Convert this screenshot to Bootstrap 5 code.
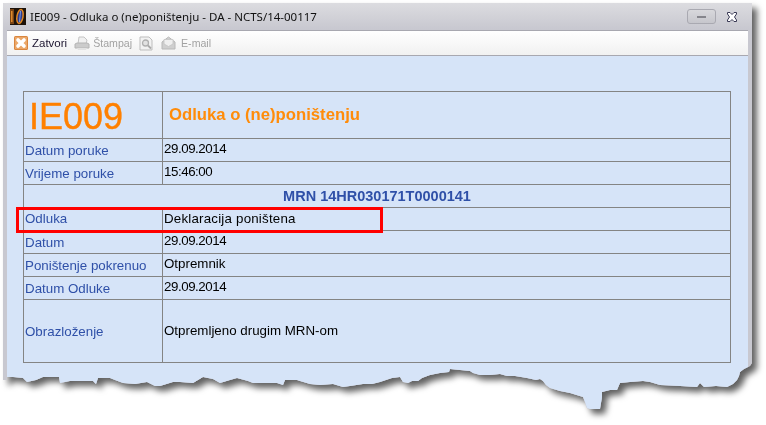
<!DOCTYPE html>
<html lang="bs">
<head>
<meta charset="utf-8">
<title>IE009</title>
<link rel="stylesheet" href="https://cdn.jsdelivr.net/npm/bootstrap@5.3.0/dist/css/bootstrap.min.css">
<style>
html,body{margin:0;background:#fff;overflow:hidden;width:766px;height:425px}
.shadow-wrap{width:766px;height:425px;filter:drop-shadow(5px 5px 3px rgba(0,0,0,.62))}
.torn{width:766px;height:425px;padding:3px 14px 0 3px;
clip-path:polygon(3px 3px,752px 3px,752px 363px,750px 366px,748px 367px,744px 369px,740px 372px,739px 376px,737px 380px,733px 384px,727px 387px,716px 386px,704px 387px,700px 383px,697px 387px,680px 386px,660px 385px,650px 382px,643px 381px,630px 382px,620px 383px,617px 390px,610px 390px,602px 392px,602px 397px,600px 409px,590px 409px,587px 408px,585px 402px,583px 397px,570px 393px,560px 391px,550px 388px,546px 385px,543px 381px,540px 379px,536px 380px,527px 378px,515px 376px,507px 376px,500px 374px,490px 375px,480px 375px,473px 373px,470px 371px,460px 370px,450px 369px,449px 372px,440px 373px,430px 375px,422px 378px,418px 381px,412px 381px,408px 383px,403px 382px,400px 377px,392px 378px,380px 382px,372px 384px,363px 384px,350px 386px,343px 387px,333px 384px,320px 385px,310px 384px,300px 381px,297px 380px,285px 380px,283px 385px,277px 383px,265px 383px,253px 383px,248px 381px,237px 378px,230px 380px,220px 383px,213px 379px,203px 377px,193px 383px,180px 382px,173px 382px,160px 386px,155px 386px,147px 382px,135px 384px,123px 383px,115px 380px,110px 378px,98px 378px,96px 384px,93px 381px,80px 381px,70px 381px,60px 383px,59px 377px,55px 377px,43px 377px,36px 380px,27px 382px,23px 378px,13px 377px,7px 377px,7px 380px,3px 380px)}
.app-win{width:749px;height:406px;background:#c9c9d1;background-image:linear-gradient(#dcdce0,#c8c8d0 26px);padding:0 4px}
.title-row{height:27px;font:11.5px/27px "Noto Sans",sans-serif;color:#111}
.app-logo{margin:0 3px 0 3px}
.win-min{width:29px;height:15px;border:1px solid #a9a9b1;border-radius:3px;background:linear-gradient(#d8d8dc,#c6c6cc);margin-right:10px}
.win-min i{display:block;width:9px;height:2px;background:#85858c}
.win-close{margin-right:10px}
.tool-row{height:26px;background:linear-gradient(#fff,#f1f1f1);border-top:1px solid #a8a8b0;border-bottom:1px solid #a8a8b0;font:11.5px/24px "Liberation Sans",sans-serif;padding-left:7px}
.tool-on{color:#1d1630;margin:0 7px 0 4px}
.tool-off{color:#a2a2a2;font-size:10.6px;margin:0 7px 0 3px}
.tool-mail{margin-left:5px}
.tool-gap{margin-right:8px}
.body-pane{height:353px;background:#d6e4f8;padding:35px 17px 0 16px}
.table.msg-grid{--bs-table-bg:transparent;width:708px;table-layout:fixed;margin:0;border-color:#848484;font:13.33px/16px "Liberation Sans",sans-serif;color:#000;border-collapse:collapse}
.table.msg-grid>tbody>tr>*{padding:2px 1px 2px 1px;border:1px solid #848484;height:23px}
.msg-grid .col-a{width:139px}
.label-cell{color:#2f50a8}
.table.msg-grid>tbody>tr.head-line>*{height:47px}
.table.msg-grid>tbody>tr.tall-line>*{height:63px}
.table.msg-grid>tbody>tr>.msg-code{font-size:36px;line-height:40px;color:#ff8000;padding:4px 0 0 5px;-webkit-text-stroke:.4px #ff8000}
.table.msg-grid>tbody>tr>.msg-name{font-size:16.7px;font-weight:700;color:#ff8c0a;padding:0 0 0 6px}
.table.msg-grid>tbody>tr>.msg-mrn{color:#2f50a8;font-weight:700;font-size:14.5px;padding:1px}
.table.msg-grid>tbody>tr.tall-line>.label-cell{padding:4px 1px 2px}
.date-val{letter-spacing:-.45px}
.wide-val{letter-spacing:.2px}
.grid-area{position:relative}
.red-frame{position:absolute;left:-7px;top:116px;width:367px;height:26px;border:3px solid #f00;pointer-events:none}
</style>
</head>
<body>
<div class="shadow-wrap">
<div class="torn">
<div class="app-win">
  <div class="title-row d-flex align-items-center">
    <svg class="app-logo" width="17" height="18" viewBox="0 0 17 18"><rect width="16" height="17" fill="#1c120a"/><path d="M0 1h4v15H0z" fill="#7a4414"/><path d="M1 3h1.500v11H1z" fill="#e08a2a"/><ellipse cx="10" cy="8.500" rx="3" ry="7" transform="rotate(10 10 8.500)" fill="#2a3a90" stroke="#e0861f" stroke-width="1.500"/><path d="M10.500 3 9.500 14" stroke="#7f9ad8"/></svg>
    <span class="flex-grow-1">IE009 - Odluka o (ne)poništenju - DA - NCTS/14-00117</span>
    <span class="win-min d-flex align-items-center justify-content-center"><i></i></span>
    <svg class="win-close" width="12" height="10" viewBox="0 0 12 10"><path d="M1.500 .5h2.500L6 2.500l2-2h2.500V2L8.500 5l2 3v1.500H8L6 7.500l-2 2H1.500V8l2-3-2-3z" fill="#fff" stroke="#3a3a55"/></svg>
  </div>
  <div class="tool-row d-flex align-items-center">
    <svg width="14" height="14" viewBox="0 0 14 14"><rect width="14" height="14" rx="1.500" fill="#d9863f"/><rect x="1" y="1" width="12" height="12" fill="#eba768"/><path d="m4 4 6 6m0-6-6 6" stroke="#fff" stroke-width="3.600" stroke-linecap="round"/></svg>
    <span class="tool-on">Zatvori</span>
    <svg width="16" height="15" viewBox="0 0 16 15"><path d="M5 1h5l3 3-1 4H4z" fill="#f0f0f0" stroke="#c4c4c4"/><path d="M1 8l2-1h10l2 1v4H1z" fill="#cbcbcb" stroke="#b4b4b4"/><path d="M3 12h10l-1 2H4z" fill="#e2e2e2"/></svg>
    <span class="tool-off">Štampaj</span>
    <svg class="tool-gap" width="14" height="15" viewBox="0 0 14 15"><path d="M1 1h9l3 3v10H1z" fill="#f2f2f2" stroke="#bdbdbd"/><circle cx="6.500" cy="7" r="3" fill="#e2e2e2" stroke="#b0b0b0" stroke-width="1.300"/><path d="m9 9.500 3 3" stroke="#aaa" stroke-width="1.800"/></svg>
    <svg width="15" height="14" viewBox="0 0 15 14"><path d="M1 6 7.500 1 14 6v7H1z" fill="#cfcfcf" stroke="#b8b8b8"/><path d="M3 3.500h9V8L7.500 10.500 3 8z" fill="#efefef" stroke="#c4c4c4" stroke-width=".8"/></svg>
    <span class="tool-off tool-mail">E-mail</span>
  </div>
  <div class="body-pane">
    <div class="grid-area">
      <table class="table table-bordered msg-grid">
        <colgroup><col class="col-a"><col></colgroup>
        <tbody>
          <tr class="head-line"><td class="msg-code align-middle">IE009</td><td class="msg-name align-middle">Odluka o (ne)poništenju</td></tr>
          <tr><td class="label-cell align-bottom">Datum poruke</td><td class="align-top date-val">29.09.2014</td></tr>
          <tr><td class="label-cell align-bottom">Vrijeme poruke</td><td class="align-top date-val">15:46:00</td></tr>
          <tr><td colspan="2" class="msg-mrn text-center align-middle">MRN 14HR030171T0000141</td></tr>
          <tr><td class="label-cell align-middle">Odluka</td><td class="align-middle wide-val">Deklaracija poništena</td></tr>
          <tr><td class="label-cell align-bottom">Datum</td><td class="align-top date-val">29.09.2014</td></tr>
          <tr><td class="label-cell align-bottom">Poništenje pokrenuo</td><td class="align-top">Otpremnik</td></tr>
          <tr><td class="label-cell align-bottom">Datum Odluke</td><td class="align-top date-val">29.09.2014</td></tr>
          <tr class="tall-line"><td class="label-cell align-middle">Obrazloženje</td><td class="align-middle">Otpremljeno drugim MRN-om</td></tr>
        </tbody>
      </table>
      <div class="red-frame"></div>
    </div>
  </div>
</div>
</div>
</div>
</body>
</html>
